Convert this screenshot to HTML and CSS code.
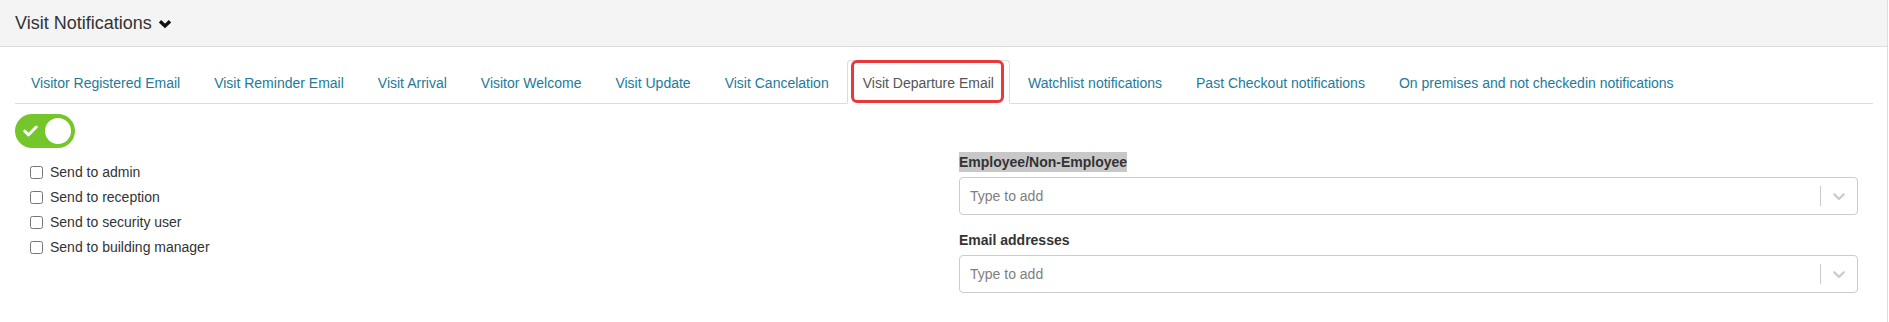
FILE: index.html
```html
<!DOCTYPE html>
<html lang="en">
<head>
  <meta charset="UTF-8" />
  <title>Visit Notifications</title>
  <link rel="stylesheet" href="styles.css">
</head>

<body>

  <div class="page">
    <div class="section-head">
      <span class="section-title">Visit Notifications</span>
      <svg class="caret" width="14" height="10" viewBox="0 0 14 10" aria-hidden="true">
        <polyline points="2,2.2 7,7 12,2.2" fill="none" stroke="#111" stroke-width="3.4" />
      </svg>
    </div>

    <div class="section-body">
      <ul class="tabs">
        <li><a href="#">Visitor Registered Email</a></li>
        <li><a href="#">Visit Reminder Email</a></li>
        <li><a href="#">Visit Arrival</a></li>
        <li><a href="#">Visitor Welcome</a></li>
        <li><a href="#">Visit Update</a></li>
        <li><a href="#">Visit Cancelation</a></li>
        <li class="active marked"><a href="#">Visit Departure Email</a></li>
        <li><a href="#">Watchlist notifications</a></li>
        <li><a href="#">Past Checkout notifications</a></li>
        <li><a href="#">On premises and not checkedin notifications</a></li>
      </ul>

      <div class="toggle">
        <svg width="15" height="12" viewBox="0 0 15 12" aria-hidden="true">
          <polyline points="1.8,6.2 5.6,9.8 13.2,2" fill="none" stroke="#fff" stroke-width="3" stroke-linecap="round" stroke-linejoin="round" />
        </svg>
        <span class="knob"></span>
      </div>

      <div class="settings">
        <div class="recipients">
          <label class="check"><input type="checkbox" />Send to admin</label>
          <label class="check"><input type="checkbox" />Send to reception</label>
          <label class="check"><input type="checkbox" />Send to security user</label>
          <label class="check"><input type="checkbox" />Send to building manager</label>
        </div>

        <div class="addresses">
          <div class="field-label"><span class="selected-text">Employee/Non-Employee</span></div>
          <div class="picker">
            <div class="picker-value">Type to add</div>
            <span class="picker-sep"></span>
            <div class="picker-arrow">
              <svg width="20" height="20" viewBox="0 0 20 20" aria-hidden="true">
                <path d="M4.516 7.548c0.436-0.446 1.043-0.481 1.576 0l3.908 3.747 3.908-3.747c0.533-0.481 1.141-0.446 1.574 0 0.436 0.445 0.408 1.197 0 1.615-0.406 0.418-4.695 4.502-4.695 4.502-0.217 0.223-0.502 0.335-0.787 0.335s-0.57-0.112-0.789-0.335c0 0-4.287-4.084-4.695-4.502s-0.436-1.170 0-1.615z" fill="#ccc" />
              </svg>
            </div>
          </div>

          <div class="field-label spaced">Email addresses</div>
          <div class="picker">
            <div class="picker-value">Type to add</div>
            <span class="picker-sep"></span>
            <div class="picker-arrow">
              <svg width="20" height="20" viewBox="0 0 20 20" aria-hidden="true">
                <path d="M4.516 7.548c0.436-0.446 1.043-0.481 1.576 0l3.908 3.747 3.908-3.747c0.533-0.481 1.141-0.446 1.574 0 0.436 0.445 0.408 1.197 0 1.615-0.406 0.418-4.695 4.502-4.695 4.502-0.217 0.223-0.502 0.335-0.787 0.335s-0.57-0.112-0.789-0.335c0 0-4.287-4.084-4.695-4.502s-0.436-1.170 0-1.615z" fill="#ccc" />
              </svg>
            </div>
          </div>
        </div>
      </div>
    </div>
  </div>

</body>
</html>
```

FILE: styles.css
```css
body {
  margin: 0;
  font-family: "Liberation Sans", Arial, sans-serif;
  font-size: 14px;
  line-height: 20px;
  color: #333;
  background: #fff;
}

.page {
  width: 1888px;
  min-height: 322px;
  box-sizing: border-box;
  border-right: 1px solid #ddd;
}

.section-head {
  height: 46px;
  display: flex;
  align-items: center;
  gap: 6px;
  padding-left: 15px;
  background: #f4f4f4;
  border-bottom: 1px solid #ddd;
}

.section-title {
  font-size: 18px;
  color: #333;
}

.caret {
  margin-top: 1px;
}

.section-body {
  padding: 13px 14px 0 15px;
}

.tabs {
  list-style: none;
  margin: 0;
  padding: 0;
  display: flex;
  border-bottom: 1px solid #ddd;
}

.tabs li {
  position: relative;
  margin-bottom: -1px;
  margin-right: 2px;
}

.tabs a {
  display: block;
  padding: 12px 15px 10px;
  line-height: 20px;
  color: #237a9a;
  text-decoration: none;
  border: 1px solid transparent;
  border-radius: 4px 4px 0 0;
}

.tabs .active a {
  color: #555;
  background: #fff;
  border-color: #ddd #ddd transparent;
}

.tabs .marked::after {
  content: "";
  position: absolute;
  top: 0;
  left: 4px;
  right: 6px;
  bottom: 1px;
  border: 3px solid #e8383c;
  border-radius: 6px;
  pointer-events: none;
}

.toggle {
  width: 60px;
  height: 34px;
  box-sizing: border-box;
  margin-top: 10px;
  padding: 0 4px 0 8px;
  display: flex;
  align-items: center;
  justify-content: space-between;
  background: #74c62a;
  border-radius: 17px;
}

.knob {
  width: 26px;
  height: 26px;
  border-radius: 50%;
  background: #fff;
}

.settings {
  display: grid;
  grid-template-columns: 1fr 1fr;
}

.recipients {
  padding: 14px 0 0 15px;
  display: flex;
  flex-direction: column;
  gap: 5px;
}

.check {
  display: flex;
  align-items: center;
  color: #333;
}

.check input {
  width: 13px;
  height: 13px;
  margin: 0 7px 0 0;
}

.addresses {
  padding: 4px 15px 0 15px;
}

.field-label {
  font-weight: bold;
  line-height: 20px;
  margin-bottom: 5px;
}

.field-label.spaced {
  margin-top: 15px;
}

.selected-text {
  display: inline-block;
  background: #c8c8c8;
}

.picker {
  height: 38px;
  box-sizing: border-box;
  display: flex;
  align-items: stretch;
  border: 1px solid #ccc;
  border-radius: 4px;
  background: #fff;
}

.picker-value {
  flex: 1;
  display: flex;
  align-items: center;
  padding: 2px 8px 2px 10px;
  color: #808080;
}

.picker-sep {
  width: 1px;
  margin: 8px 0;
  background: #ccc;
}

.picker-arrow {
  display: flex;
  align-items: center;
  padding: 0 8px;
}

.picker-arrow svg {
  display: block;
}
```
